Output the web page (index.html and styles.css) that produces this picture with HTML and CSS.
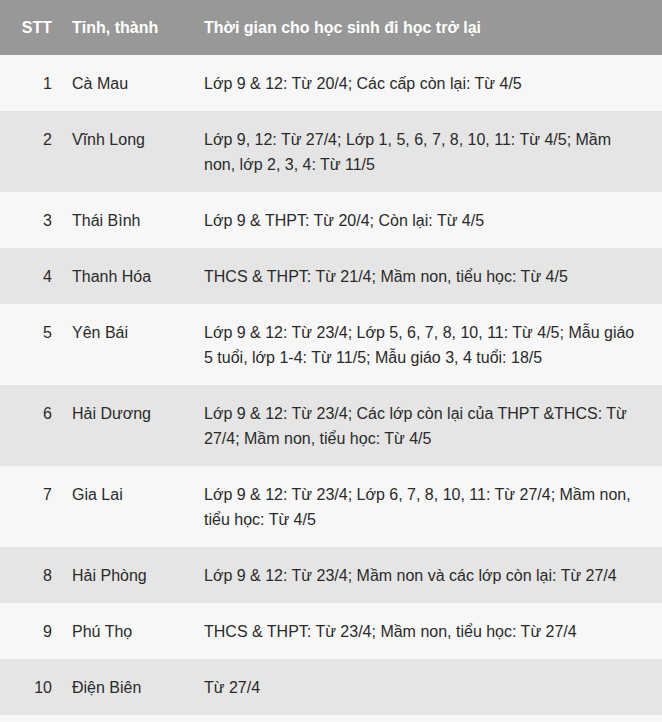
FILE: index.html
```html
<!DOCTYPE html>
<html lang="vi">
<head>
<meta charset="utf-8">
<title>Thời gian cho học sinh đi học trở lại</title>
<link rel="stylesheet" href="styles.css">
</head>
<body>
<table class="schedule">
  <colgroup>
    <col class="c-stt">
    <col class="c-prov">
    <col class="c-time">
  </colgroup>
  <thead>
    <tr><th class="stt">STT</th><th>Tỉnh, thành</th><th class="time">Thời gian cho học sinh đi học trở lại</th></tr>
  </thead>
  <tbody>
    <tr><td class="stt">1</td><td>Cà Mau</td><td class="time">Lớp 9 &amp; 12: Từ 20/4; Các cấp còn lại: Từ 4/5</td></tr>
    <tr><td class="stt">2</td><td>Vĩnh Long</td><td class="time">Lớp 9, 12: Từ 27/4; Lớp 1, 5, 6, 7, 8, 10, 11: Từ 4/5; Mầm non, lớp 2, 3, 4: Từ 11/5</td></tr>
    <tr><td class="stt">3</td><td>Thái Bình</td><td class="time">Lớp 9 &amp; THPT: Từ 20/4; Còn lại: Từ 4/5</td></tr>
    <tr><td class="stt">4</td><td>Thanh Hóa</td><td class="time">THCS &amp; THPT: Từ 21/4; Mầm non, tiểu học: Từ 4/5</td></tr>
    <tr><td class="stt">5</td><td>Yên Bái</td><td class="time">Lớp 9 &amp; 12: Từ 23/4; Lớp 5, 6, 7, 8, 10, 11: Từ 4/5; Mẫu giáo 5 tuổi, lớp 1-4: Từ 11/5; Mẫu giáo 3, 4 tuổi: 18/5</td></tr>
    <tr><td class="stt">6</td><td>Hải Dương</td><td class="time">Lớp 9 &amp; 12: Từ 23/4; Các lớp còn lại của THPT &amp;THCS: Từ 27/4; Mầm non, tiểu học: Từ 4/5</td></tr>
    <tr><td class="stt">7</td><td>Gia Lai</td><td class="time">Lớp 9 &amp; 12: Từ 23/4; Lớp 6, 7, 8, 10, 11: Từ 27/4; Mầm non, tiểu học: Từ 4/5</td></tr>
    <tr><td class="stt">8</td><td>Hải Phòng</td><td class="time">Lớp 9 &amp; 12: Từ 23/4; Mầm non và các lớp còn lại: Từ 27/4</td></tr>
    <tr><td class="stt">9</td><td>Phú Thọ</td><td class="time">THCS &amp; THPT: Từ 23/4; Mầm non, tiểu học: Từ 27/4</td></tr>
    <tr><td class="stt">10</td><td>Điện Biên</td><td class="time">Từ 27/4</td></tr>
    <tr class="empty"><td class="stt"></td><td></td><td class="time"></td></tr>
  </tbody>
</table>
</body>
</html>
```
FILE: styles.css
```css
html, body {
  margin: 0;
  padding: 0;
  background: #ffffff;
}
body {
  font-family: "Liberation Sans", Arial, sans-serif;
  font-size: 16px;
  color: #2a2a2a;
}
.schedule {
  width: 662px;
  border-collapse: collapse;
  table-layout: fixed;
}
.c-stt { width: 62px; }
.c-prov { width: 132px; }
.c-time { width: 468px; }
.schedule th,
.schedule td {
  padding: 16px 10px 15px 10px;
  line-height: 25px;
  text-align: left;
  vertical-align: top;
}
.schedule th {
  background: #989898;
  color: #ffffff;
  font-weight: bold;
  padding-top: 15px;
  padding-bottom: 15px;
}
.schedule .stt { text-align: right; }
.schedule .time { padding-right: 20px; }
.schedule tbody tr:nth-child(odd) { background: #f7f7f7; }
.schedule tbody tr:nth-child(even) { background: #e5e5e5; }
.schedule tr.empty td { height: 25px; }
```
